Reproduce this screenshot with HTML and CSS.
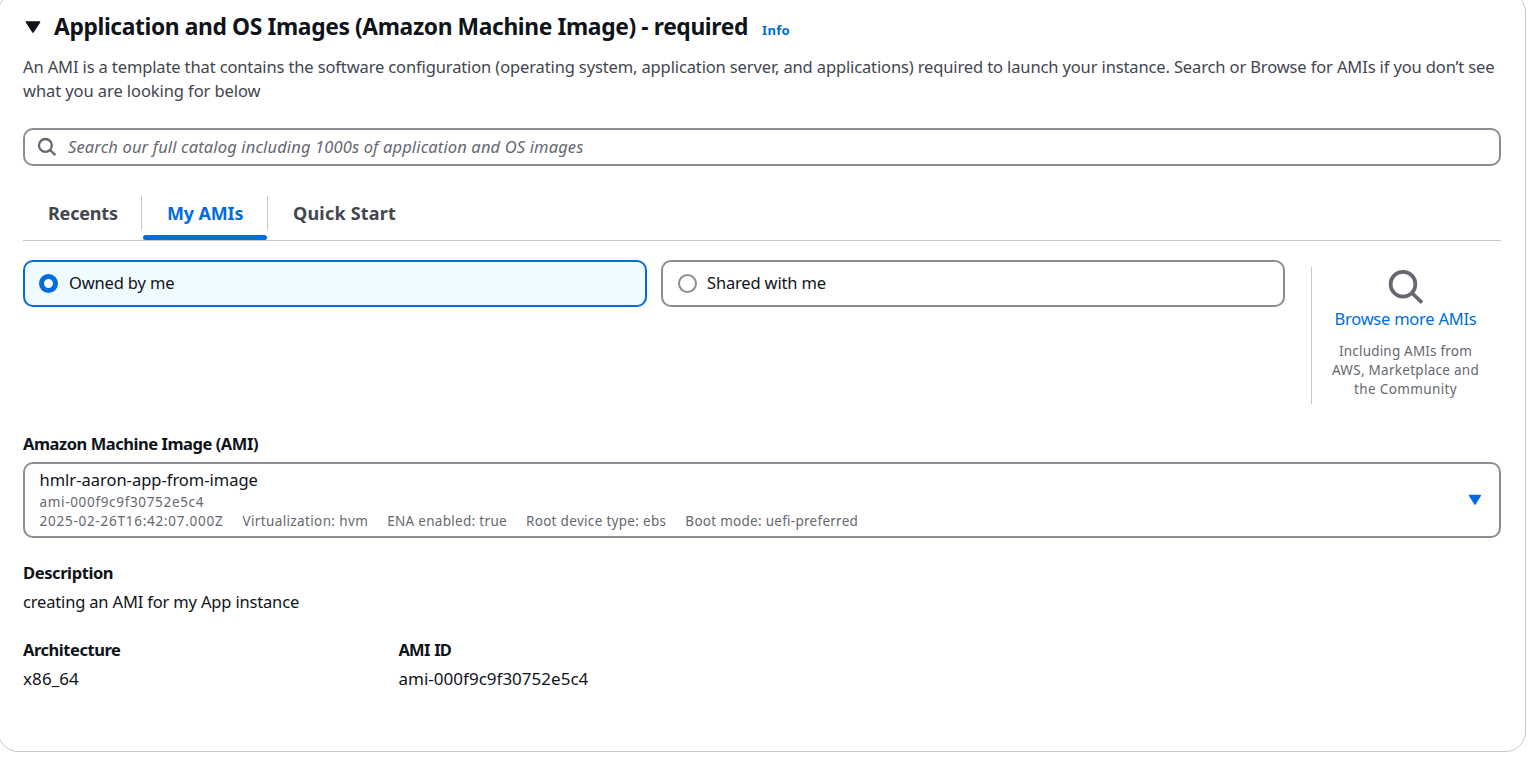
FILE: index.html
```
<!DOCTYPE html>
<html lang="en">
<head>
<meta charset="utf-8">
<title>Application and OS Images</title>
<link rel="stylesheet" href="styles.css">
</head>
<body>
<main class="card">
  <header class="heading">
    <svg class="heading-caret" width="16" height="12" viewBox="0 0 16 12"><path d="M1.5 1h13L8 11z" fill="#0f141a" stroke="#0f141a" stroke-width="1.6" stroke-linejoin="round"/></svg>
    <h2 class="title">Application and OS Images (Amazon Machine Image) - required</h2>
    <a class="info">Info</a>
  </header>
  <p class="intro"><span class="intro-first">An AMI is a template that contains the software configuration (operating system, application server, and applications) required to launch your instance. Search or Browse for AMIs if you don’t see</span><br><span class="intro-last">what you are looking for below</span></p>

  <div class="search">
    <svg width="20" height="20" viewBox="0 0 20 20" fill="none" stroke="#656871" stroke-width="2.3"><circle cx="8.4" cy="8.4" r="6.4"/><path d="M13 13l5.4 5.2"/></svg>
    <span class="placeholder">Search our full catalog including 1000s of application and OS images</span>
  </div>

  <nav class="tabs">
    <a class="tab tab-recents">Recents</a>
    <a class="tab tab-active">My AMIs</a>
    <a class="tab tab-quick">Quick Start</a>
  </nav>

  <section class="sources">
    <div class="tile tile-selected"><span class="radio radio-on"></span><span>Owned by me</span></div>
    <div class="tile tile-shared"><span class="radio"></span><span>Shared with me</span></div>
    <aside class="browse">
      <svg width="36" height="36" viewBox="0 0 36 36" fill="none" stroke="#656871" stroke-width="3.7"><circle cx="15" cy="15.2" r="12.4"/><path d="M24 24l10 9.6"/></svg>
      <a class="browse-link">Browse more AMIs</a>
      <p class="browse-note"><span class="note-a">Including AMIs from</span><br><span class="note-b">AWS, Marketplace and</span><br><span class="note-c">the Community</span></p>
    </aside>
  </section>

  <h3 class="label label-ami">Amazon Machine Image (AMI)</h3>
  <div class="select">
    <div class="select-body">
      <div class="ami-name">hmlr-aaron-app-from-image</div>
      <div class="meta meta-id">ami-000f9c9f30752e5c4</div>
      <div class="meta meta-row">
        <span class="meta-date">2025-02-26T16:42:07.000Z</span>
        <span class="meta-virt">Virtualization: hvm</span>
        <span class="meta-ena">ENA enabled: true</span>
        <span class="meta-root">Root device type: ebs</span>
        <span class="meta-boot">Boot mode: uefi-preferred</span>
      </div>
    </div>
    <svg width="14" height="12" viewBox="0 0 14 12"><path d="M1.7 1.5h10.6L7 10.2z" fill="#006ce0" stroke="#006ce0" stroke-width="1.5" stroke-linejoin="round"/></svg>
  </div>

  <section class="details">
    <div class="detail detail-wide">
      <h3 class="label label-desc">Description</h3>
      <p class="value value-desc">creating an AMI for my App instance</p>
    </div>
    <div class="detail">
      <h3 class="label label-arch">Architecture</h3>
      <p class="value value-arch">x86_64</p>
    </div>
    <div class="detail">
      <h3 class="label label-id">AMI ID</h3>
      <p class="value value-id">ami-000f9c9f30752e5c4</p>
    </div>
  </section>
</main>
</body>
</html>
```

FILE: styles.css
```
* { box-sizing: border-box; }
html, body { height: 100%; }
body {
  margin: 0;
  overflow: hidden;
  background: #fff;
  color: #0f141a;
  font: 16.5px/24px "Noto Sans", sans-serif;
}
h2, h3, p { margin: 0; }
.card {
  width: 1528px;
  height: 760px;
  margin: -8px 0 0 -2px;
  padding: 19px 24px 0;
  border: 1px solid #c6c6cd;
  border-radius: 20px;
}

.heading { display: flex; align-items: center; height: 30px; }
.heading-caret { margin: 0 13px 0 2px; flex: none; }
.title {
  width: 708px;
  font-size: 22.8px;
  line-height: 30px;
  letter-spacing: -0.376px;
  white-space: nowrap;
}
.info {
  padding-top: 5px;
  color: #006ce0;
  font-size: 13px;
  font-weight: 700;
  letter-spacing: 0.33px;
}

.intro { margin-top: 13px; color: #424650; white-space: nowrap; }
.intro-first { letter-spacing: -0.129px; }
.intro-last { letter-spacing: -0.081px; }

.search {
  display: flex;
  align-items: center;
  gap: 11px;
  height: 38px;
  margin-top: 25px;
  padding-left: 12px;
  border: 2px solid #8c8c94;
  border-radius: 10px;
}
.placeholder { color: #656871; font-style: italic; letter-spacing: 0.143px; }

.tabs {
  display: flex;
  height: 45px;
  margin-top: 30px;
  border-bottom: 1px solid #c6c6cd;
}
.tab {
  position: relative;
  height: 34px;
  padding: 5px 0 0 25px;
  border-right: 1px solid #c6c6cd;
  color: #424650;
  font-size: 18px;
  font-weight: 700;
  white-space: nowrap;
}
.tab-recents { width: 119px; letter-spacing: -0.2px; }
.tab-active { width: 126px; color: #006ce0; letter-spacing: -0.15px; }
.tab-active::after {
  content: "";
  position: absolute;
  left: 1px;
  right: 0;
  bottom: -10px;
  height: 5px;
  border-radius: 3px;
  background: #006ce0;
}
.tab-quick { border-right: 0; letter-spacing: 0.2px; }

.sources { display: flex; gap: 14px; height: 171px; margin-top: 19px; }
.tile {
  display: flex;
  align-items: center;
  gap: 11px;
  width: 624px;
  height: 47px;
  padding: 0 14px 1px;
  border: 2px solid #8c8c94;
  border-radius: 10px;
  letter-spacing: -0.16px;
}
.tile-selected { border-color: #006ce0; background: #f0fbff; }
.tile-shared { gap: 10px; padding-left: 15px; }
.radio {
  width: 19px;
  height: 19px;
  border: 2px solid #8c8c94;
  border-radius: 50%;
  background: #fff;
}
.radio-on { border: 5.5px solid #006ce0; }
.browse {
  display: flex;
  flex-direction: column;
  align-items: center;
  width: 190px;
  height: 137px;
  margin: 7px 0 0 12px;
  padding: 2px 2px 0 0;
  border-left: 1px solid #c6c6cd;
}
.browse-link { margin-top: 2px; color: #006ce0; letter-spacing: -0.239px; }
.browse-note {
  margin-top: 11px;
  color: #656871;
  font-size: 13.5px;
  line-height: 19px;
  text-align: center;
}
.note-a { letter-spacing: 0.192px; }
.note-b { letter-spacing: 0.277px; }
.note-c { letter-spacing: 0.368px; }

.label { font-size: 16.5px; font-weight: 700; line-height: 24px; }
.label-ami { margin-top: 1px; letter-spacing: -0.455px; }
.select {
  display: flex;
  align-items: center;
  justify-content: space-between;
  height: 76px;
  margin-top: 6px;
  padding: 0 17px 0 14.5px;
  border: 2px solid #8c8c94;
  border-radius: 10px;
}
.select-body { height: 64px; }
.ami-name { margin-bottom: 1px; letter-spacing: -0.01px; }
.meta { color: #656871; font-size: 13.5px; line-height: 19px; }
.meta-id { letter-spacing: 0.67px; }
.meta-row { display: flex; gap: 19px; white-space: nowrap; }
.meta-date { letter-spacing: 0.747px; }
.meta-virt { letter-spacing: 0.37px; }
.meta-ena { letter-spacing: 0.3px; }
.meta-root { letter-spacing: 0.31px; }
.meta-boot { letter-spacing: 0.27px; }

.details {
  display: grid;
  grid-template-columns: 375.5px 1fr;
  row-gap: 24px;
  margin-top: 23px;
}
.detail-wide { grid-column: 1 / -1; }
.value { margin-top: 5px; }
.label-desc { letter-spacing: -0.4px; }
.label-arch { letter-spacing: -0.46px; }
.label-id { letter-spacing: -0.8px; word-spacing: 1.2px; }
.value-desc { letter-spacing: -0.17px; }
.value-arch { font-size: 17px; letter-spacing: 0.08px; }
.value-id { font-size: 17px; letter-spacing: 0.01px; }
```
